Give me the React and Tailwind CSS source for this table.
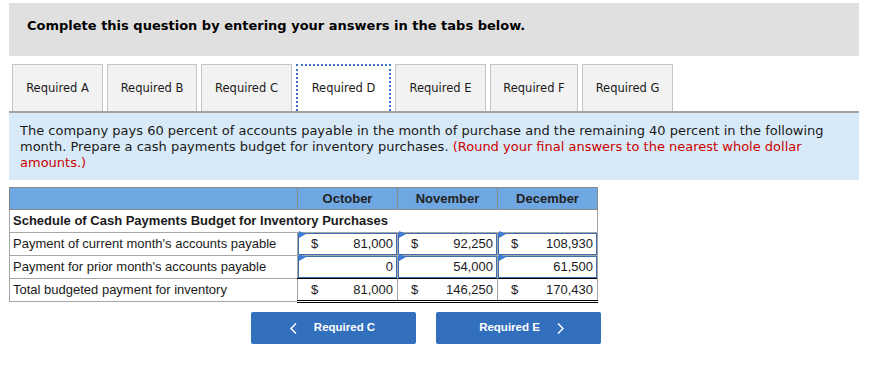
const tabs = [
  { name: 'Required A', w: 'w-[91px]' },
  { name: 'Required B', w: 'w-[90px]' },
  { name: 'Required C', w: 'w-[91px]' },
  { name: 'Required D', w: 'w-[95px]' },
  { name: 'Required E', w: 'w-[91px]' },
  { name: 'Required F', w: 'w-[88px]' },
  { name: 'Required G', w: 'w-[91px]' },
]

const rows = [
  { label: "Payment of current month's accounts payable", values: ['81,000', '92,250', '108,930'], dollar: true },
  { label: "Payment for prior month's accounts payable", values: ['0', '54,000', '61,500'], dollar: false },
]

const totals = ['81,000', '146,250', '170,430']

function Flag() {
  return (
    <svg className="absolute left-[0px] top-[-3px] w-[7px] h-[7px]" viewBox="0 0 7 7">
      <polygon points="0,0 7,3 0,7" fill="#3d7bd9" />
    </svg>
  )
}

function InputCell({ value, dollar }) {
  return (
    <td className="border border-[#a6a6a6] p-0 h-[23px]">
      <div className="relative h-[22px] border border-[#3f6fb0] flex items-center justify-between pl-[12px] pr-[3px]">
        <Flag />
        <span>{dollar ? '$' : ''}</span>
        <span>{value}</span>
      </div>
    </td>
  )
}

export default function App() {
  return (
    <div className="w-[878px] h-[367px] bg-white pt-[3px] pl-[9px] font-['DejaVu_Sans',sans-serif] text-[#1a1a1a]">
      <div className="w-[850px] h-[53px] bg-[#e0e0e0] pl-[18px] pt-[13px]">
        <p className="text-[13px] font-bold text-black">Complete this question by entering your answers in the tabs below.</p>
      </div>

      <div className="w-[850px] mt-[8px] flex items-end gap-[4px] pl-[3px] border-b-2 border-[#a3a3a3]">
        {tabs.map(t => (
          <div
            key={t.name}
            className={
              t.name === 'Required D'
                ? `h-[47px] ${t.w} flex items-center justify-center pt-[1px] text-[11.5px] bg-white border-2 border-dotted border-[#3b74c6] border-b-0`
                : `h-[47px] ${t.w} flex items-center justify-center pt-[2px] text-[11.5px] bg-[#f2f2f2] border border-[#c4c4c4] border-b-0`
            }
          >
            {t.name}
          </div>
        ))}
      </div>

      <div className="w-[850px] h-[67px] bg-[#d8eaf8] pl-[11px] pr-[10px] pt-[10px] text-[13px] leading-[16px]">
        The company pays 60 percent of accounts payable in the month of purchase and the remaining 40 percent in the following month. Prepare a cash payments budget for inventory purchases.{' '}
        <span className="text-[#cc0000]">(Round your final answers to the nearest whole dollar amounts.)</span>
      </div>

      <table className="mt-[7px] border-collapse font-['Liberation_Sans',Arial,sans-serif] text-[13px] text-[#1a1a1a]">
        <colgroup>
          <col className="w-[288px]" />
          <col className="w-[100px]" />
          <col className="w-[100px]" />
          <col className="w-[100px]" />
        </colgroup>
        <thead>
          <tr className="h-[22px] bg-[#6fa7e2]">
            <th className="border border-[#8a8a8a]"></th>
            <th className="border border-[#8a8a8a] font-bold text-[#222]">October</th>
            <th className="border border-[#8a8a8a] font-bold text-[#222]">November</th>
            <th className="border border-[#8a8a8a] font-bold text-[#222]">December</th>
          </tr>
        </thead>
        <tbody>
          <tr className="h-[23px]">
            <td colSpan={4} className="border border-[#a6a6a6] px-[3px] font-bold">
              Schedule of Cash Payments Budget for Inventory Purchases
            </td>
          </tr>
          {rows.map(r => (
            <tr key={r.label}>
              <td className="border border-[#a6a6a6] px-[3px] h-[23px]">{r.label}</td>
              {r.values.map((v, i) => (
                <InputCell key={i} value={v} dollar={r.dollar} />
              ))}
            </tr>
          ))}
          <tr className="h-[23px]">
            <td className="border border-[#a6a6a6] px-[3px]">Total budgeted payment for inventory</td>
            {totals.map((v, i) => (
              <td key={i} className="border-x border-[#a6a6a6] border-t border-t-black border-b-[3px] border-b-black border-double p-0">
                <div className="flex justify-between pl-[13px] pr-[4px]">
                  <span>$</span>
                  <span>{v}</span>
                </div>
              </td>
            ))}
          </tr>
        </tbody>
      </table>

      <div className="mt-[9px] ml-[242px] flex gap-[20px] font-['Liberation_Sans',Arial,sans-serif]">
        <button className="w-[165px] h-[32px] rounded-[2px] bg-[#3270be] text-white text-[11.5px] font-bold flex items-center justify-center gap-[17px] pr-[2px]">
          <svg width="7" height="11" viewBox="0 0 7 11" fill="none" stroke="white" strokeWidth="1.5">
            <polyline points="6,0.5 1,5.5 6,10.5" />
          </svg>
          Required C
        </button>
        <button className="w-[165px] h-[32px] rounded-[2px] bg-[#3270be] text-white text-[11.5px] font-bold flex items-center justify-center gap-[17px] pl-[6px]">
          Required E
          <svg width="7" height="11" viewBox="0 0 7 11" fill="none" stroke="white" strokeWidth="1.5">
            <polyline points="1,0.5 6,5.5 1,10.5" />
          </svg>
        </button>
      </div>
    </div>
  )
}
